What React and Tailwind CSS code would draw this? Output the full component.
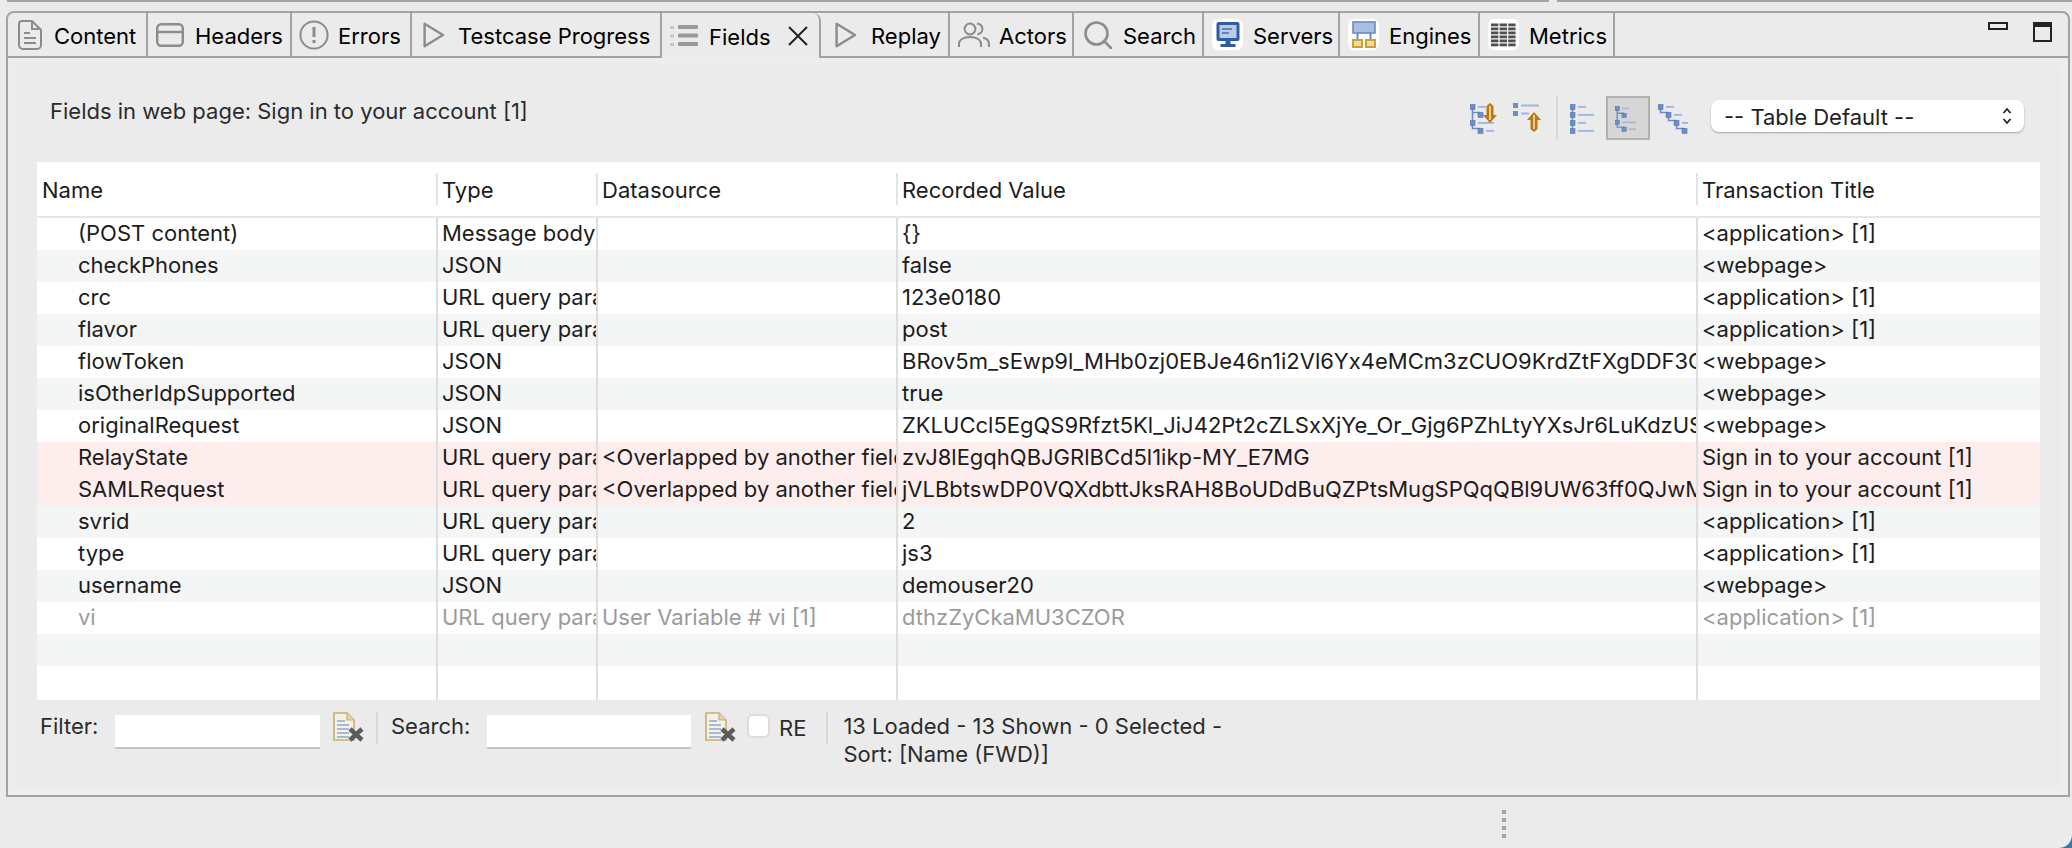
const font = { fontFamily: '"Inter", "Liberation Sans", sans-serif' };

function DocIcon() {
  return (
    <svg viewBox="0 0 24 30" className="ml-[10px] w-[24px] h-[30px]" fill="none" stroke="#8c8c8c" strokeWidth="2">
      <path d="M4 1h10l9 9v15a4 4 0 0 1-4 4H5a4 4 0 0 1-4-4V4a3 3 0 0 1 3-3z" />
      <path d="M14 1v8h9M6 13h6M6 18h12M6 23h12" />
    </svg>
  );
}
function HeaderIcon() {
  return (
    <svg viewBox="0 0 28 24" className="ml-[8px] w-[28px] h-[24px]" fill="none" stroke="#8c8c8c" strokeWidth="2.4">
      <rect x="1.2" y="1.2" width="25.6" height="21.6" rx="4" />
      <path d="M1 9h26" />
    </svg>
  );
}
function ErrorIcon() {
  return (
    <svg viewBox="0 0 30 30" className="ml-[7px] w-[30px] h-[30px]" fill="none" stroke="#8c8c8c" strokeWidth="2">
      <circle cx="15" cy="15" r="13.6" />
      <path d="M15 7v10" strokeWidth="3" />
      <path d="M15 20v3" strokeWidth="3" />
    </svg>
  );
}
function PlayIcon({ cls }) {
  return (
    <svg viewBox="0 0 22 26" className={cls} fill="none" stroke="#8c8c8c" strokeWidth="2.4">
      <path d="M1.6 1.8v22.4L20 13z" strokeLinejoin="round" />
    </svg>
  );
}
function ListIcon() {
  return (
    <svg viewBox="0 0 28 22" className="ml-[8px] w-[28px] h-[22px]" fill="#9a9a9a">
      <rect x="0" y="1" width="4" height="3" fill="#c8c8c8" />
      <rect x="0" y="9.5" width="4" height="3" fill="#c8c8c8" />
      <rect x="0" y="18" width="4" height="3" fill="#c8c8c8" />
      <rect x="8" y="0" width="20" height="4" rx="1" />
      <rect x="8" y="8.5" width="20" height="4" rx="1" />
      <rect x="8" y="17" width="20" height="4" rx="1" />
    </svg>
  );
}
function ActorsIcon() {
  return (
    <svg viewBox="0 0 32 26" className="ml-[8px] w-[32px] h-[26px]" fill="none" stroke="#8c8c8c" strokeWidth="2">
      <circle cx="12" cy="7" r="5.4" />
      <path d="M1 25v-3c0-4 4-7 11-7s11 3 11 7v3" />
      <path d="M19 1.6c3.6.6 5.4 3 5.4 5.4s-1.8 4.8-5 5.4" />
      <path d="M25 15.5c3.6 1 6 3.4 6 6.5v3" />
    </svg>
  );
}
function SearchIcon() {
  return (
    <svg viewBox="0 0 28 28" className="ml-[10px] w-[28px] h-[28px]" fill="none" stroke="#8c8c8c" strokeWidth="2.6">
      <circle cx="12.5" cy="12.5" r="11" />
      <path d="M20 20l7 7" strokeLinecap="round" />
    </svg>
  );
}
function ServerIcon() {
  return (
    <div className="ml-[8px] w-[31px] h-[31px] rounded-md bg-white flex items-center justify-center">
      <svg viewBox="0 0 24 25" className="w-[24px] h-[25px]">
        <rect x="0.5" y="0" width="23" height="19" rx="2" fill="#2f5da3" />
        <rect x="3.5" y="3" width="17" height="13" fill="#b9cbe6" />
        <path d="M6 7h10M6 11h7" stroke="#4a6ea8" strokeWidth="1.6" />
        <path d="M9.5 19h5v3h-5z" fill="#2f5da3" />
        <rect x="4.5" y="22" width="15" height="3" fill="#2f5da3" />
      </svg>
    </div>
  );
}
function EngineIcon() {
  return (
    <div className="ml-[8px] w-[31px] h-[31px] rounded-md bg-white flex items-center justify-center">
      <svg viewBox="0 0 24 27" className="w-[24px] h-[27px]" fill="none">
        <rect x="1" y="1" width="22" height="11" fill="#a9bfe2" stroke="#6a8cc2" strokeWidth="1.6" />
        <path d="M5.5 12v7M18.5 12v7" stroke="#6a8cc2" strokeWidth="2" />
        <rect x="1" y="19" width="9" height="7" fill="#f2dc9a" stroke="#c9a23c" strokeWidth="2" />
        <rect x="14" y="19" width="9" height="7" fill="#f2dc9a" stroke="#c9a23c" strokeWidth="2" />
      </svg>
    </div>
  );
}
function MetricsIcon() {
  const cols = [0, 8.6, 17.2];
  const rows = [0, 4, 8, 12, 16, 20];
  return (
    <div className="ml-[8px] w-[31px] h-[31px] rounded-md bg-white flex items-center justify-center">
      <svg viewBox="0 0 25 24" className="w-[25px] h-[24px]" fill="#4f4f4f">
        {rows.map(y => cols.map(x => <rect key={`${x}-${y}`} x={x} y={y + 0.5} width="7.4" height="2.8" />))}
      </svg>
    </div>
  );
}

const tabs = [
  { label: "Content", w: "w-[140px]", off: "w-[46px]", icon: <DocIcon /> },
  { label: "Headers", w: "w-[144px]", off: "w-[47px]", icon: <HeaderIcon /> },
  { label: "Errors", w: "w-[120px]", off: "w-[46px]", icon: <ErrorIcon /> },
  { label: "Testcase Progress", w: "w-[250px]", off: "w-[46px]", icon: <PlayIcon cls="ml-[11px] w-[22px] h-[26px]" /> },
  { label: "Fields", w: "w-[159px]", off: "w-[47px]", icon: <ListIcon />, active: true },
  { label: "Replay", w: "w-[129px]", off: "w-[50px]", icon: <PlayIcon cls="ml-[14px] w-[22px] h-[26px]" /> },
  { label: "Actors", w: "w-[124px]", off: "w-[49px]", icon: <ActorsIcon /> },
  { label: "Search", w: "w-[130px]", off: "w-[49px]", icon: <SearchIcon /> },
  { label: "Servers", w: "w-[136px]", off: "w-[49px]", icon: <ServerIcon /> },
  { label: "Engines", w: "w-[140px]", off: "w-[49px]", icon: <EngineIcon /> },
  { label: "Metrics", w: "w-[135px]", off: "w-[49px]", icon: <MetricsIcon /> },
];

const rows = [
  ["(POST content)", "Message body", "", "{}", "<application> [1]"],
  ["checkPhones", "JSON", "", "false", "<webpage>"],
  ["crc", "URL query parameter", "", "123e0180", "<application> [1]"],
  ["flavor", "URL query parameter", "", "post", "<application> [1]"],
  ["flowToken", "JSON", "", "BRov5m_sEwp9l_MHb0zj0EBJe46n1i2Vl6Yx4eMCm3zCUO9KrdZtFXgDDF3Q0xYz", "<webpage>"],
  ["isOtherIdpSupported", "JSON", "", "true", "<webpage>"],
  ["originalRequest", "JSON", "", "ZKLUCcl5EgQS9Rfzt5Kl_JiJ42Pt2cZLSxXjYe_Or_Gjg6PZhLtyYXsJr6LuKdzUSxyz", "<webpage>"],
  ["RelayState", "URL query parameter", "<Overlapped by another field>", "zvJ8lEgqhQBJGRlBCd5l1ikp-MY_E7MG", "Sign in to your account [1]", "pink"],
  ["SAMLRequest", "URL query parameter", "<Overlapped by another field>", "jVLBbtswDP0VQXdbttJksRAH8BoUDdBuQZPtsMugSPQqQBl9UW63ff0QJwMabcd", "Sign in to your account [1]", "pink"],
  ["svrid", "URL query parameter", "", "2", "<application> [1]"],
  ["type", "URL query parameter", "", "js3", "<application> [1]"],
  ["username", "JSON", "", "demouser20", "<webpage>"],
  ["vi", "URL query parameter", "User Variable # vi [1]", "dthzZyCkaMU3CZOR", "<application> [1]", "muted"],
  ["", "", "", "", ""],
  ["", "", "", "", ""],
];

const colGrid = "grid grid-cols-[399px_160px_300px_800px_344px]";

function TreeIcon({ cls, variant }) {
  const blue = "#6f8fc4";
  const node = (x, y) => <rect x={x} y={y} width="5" height="5" fill={blue} stroke="#4f74b0" strokeWidth="0.6" />;
  const bar = (x, y, w) => <rect x={x} y={y} width={w} height="1.8" fill="#9fb5d9" />;
  if (variant === "flat") {
    return (
      <svg viewBox="0 0 24 30" className={cls}>
        <path d="M2.5 3v24" stroke={blue} strokeWidth="1.6" />
        {node(0, 1)}{bar(8, 2.5, 8)}{node(0, 9)}{bar(8, 10.5, 16)}{node(0, 17)}{bar(8, 18.5, 8)}{node(0, 25)}{bar(8, 26.5, 16)}
      </svg>
    );
  }
  if (variant === "step") {
    return (
      <svg viewBox="0 0 30 30" className={cls}>
        <path d="M2.5 3v6h8v8h8v8h8" fill="none" stroke={blue} strokeWidth="1.6" />
        {node(0, 1)}{bar(8, 2.5, 8)}{node(8, 9)}{bar(16, 10.5, 8)}{node(16, 17)}{bar(24, 18.5, 6)}{node(24, 25)}
      </svg>
    );
  }
  return (
    <svg viewBox="0 0 30 30" className={cls}>
      <path d="M2.5 3v19M2.5 9h8M2.5 22v3h8" fill="none" stroke={blue} strokeWidth="1.6" />
      {node(0, 1)}{bar(8, 2.5, 8)}{node(8, 9)}{node(0, 17)}{bar(8, 18.5, 16)}{node(8, 25)}{bar(16, 26.5, 8)}
    </svg>
  );
}

function Arrow({ up, cls }) {
  return (
    <svg viewBox="0 0 14 20" className={cls}>
      {up
        ? <path d="M7 0L14 8H10.5V17L7 20L3.5 17V8H0z" fill="#b8790f" />
        : <path d="M7 20L14 12H10.5V3L7 0L3.5 3V12H0z" fill="#b8790f" />}
      <path d="M7 3v14" stroke="#f3dfae" strokeWidth="1.6" />
    </svg>
  );
}

function ClearIcon({ cls }) {
  return (
    <svg viewBox="0 0 31 30" className={cls}>
      <path d="M1 1h13l7 7v20H1z" fill="#f4f1e6" stroke="#c9ad70" strokeWidth="1.6" />
      <path d="M14 1v7h7" fill="#e4d6ac" stroke="#c9ad70" strokeWidth="1.2" />
      <path d="M4 9h8M4 13h12M4 17h12M4 21h12M4 25h12" stroke="#8ea7cf" strokeWidth="1.6" />
      <path d="M17 17l12 11M29 17L17 28" stroke="#5c5c5c" strokeWidth="4.5" />
    </svg>
  );
}

export default function App() {
  return (
    <div className="relative h-[848px] w-[2072px] overflow-hidden bg-[#ebebeb] text-[22px] text-[#1c1c1c]" style={font}>
      <div className="flex ml-[7px] h-[2px] mb-[9px]">
        <div className="w-[1542px] bg-[#a3a3a3]" />
        <div className="w-[8px]" />
        <div className="flex-1 bg-[#a3a3a3]" />
      </div>

      <div className="ml-[6px] mr-[2px] h-[786px] flex flex-col rounded-t-lg border-2 border-[#a3a3a3] bg-[#ebebeb]">
        <div className="flex h-[45px] shrink-0">
          {tabs.map(t => (
            <div
              key={t.label}
              className={`${t.w} shrink-0 flex items-center border-r-2 border-[#a3a3a3] text-black ${t.active ? "rounded-tr-lg" : "border-b-2"}`}
            >
              <div className={`${t.off} shrink-0`}>{t.icon}</div>
              <span className="whitespace-nowrap pt-[4px]">{t.label}</span>
              {t.active && (
                <svg viewBox="0 0 20 20" className="ml-[17px] w-[20px] h-[20px]" fill="none" stroke="#222" strokeWidth="2">
                  <path d="M1 1l18 18M19 1L1 19" />
                </svg>
              )}
            </div>
          ))}
          <div className="flex-1 flex justify-end gap-[25px] pt-[9px] pr-[16px] border-b-2 border-[#a3a3a3]">
            <div className="w-[20px] h-[8px] border-2 border-[#222]" />
            <div className="w-[19px] h-[20px] border-2 border-t-[5px] border-[#222]" />
          </div>
        </div>

        <div className="flex-1 pl-[8px] pr-[7px] py-[7px] bg-[#ededed]">
          <div className="h-full bg-[#ebebeb] flex flex-col px-[21px]">
            <div className="h-[97px] shrink-0 flex items-start">
              <div className="pl-[13px] pt-[30px] text-[#2b2b2b]">Fields in web page: Sign in to your account [1]</div>
              <div className="ml-auto flex items-start pt-[31px] pr-[16px]">
                <div className="relative w-[30px] h-[31px] mt-[7px]">
                  <TreeIcon cls="w-[30px] h-[31px]" />
                  <Arrow cls="absolute left-[13px] top-[0px] w-[14px] h-[20px]" />
                </div>
                <div className="relative ml-[13px] w-[28px] h-[24px] mt-[7px]">
                  <svg viewBox="0 0 28 14" className="w-[28px] h-[14px]">
                    <rect x="0" y="0" width="5" height="5" fill="#6f8fc4" />
                    <rect x="8" y="1.5" width="18" height="2" fill="#9fb5d9" />
                    <rect x="0" y="8" width="5" height="5" fill="#6f8fc4" />
                    <rect x="8" y="9.5" width="8" height="2" fill="#9fb5d9" />
                  </svg>
                  <Arrow up cls="absolute left-[14px] top-[9px] w-[14px] h-[20px]" />
                </div>
                <div className="ml-[15px] w-[2px] h-[44px] bg-[#d8d8d8]" />
                <TreeIcon variant="flat" cls="ml-[12px] mt-[7px] w-[24px] h-[31px]" />
                <div className="ml-[12px] w-[44px] h-[44px] bg-[#d6d6d6] border-2 border-[#b2b2b2] flex items-center justify-center">
                  <TreeIcon cls="w-[26px] h-[31px]" />
                </div>
                <TreeIcon variant="step" cls="ml-[8px] mt-[7px] w-[30px] h-[31px]" />
                <div className="ml-[23px] mt-[4px] w-[313px] h-[32px] rounded-lg bg-white shadow-[0_1px_2px_rgba(0,0,0,0.3)] flex items-center pl-[13px] pr-[12px] text-[#222]">
                  <span className="pt-[2px]">-- Table Default --</span>
                  <svg viewBox="0 0 10 18" className="ml-auto w-[10px] h-[18px]" fill="none" stroke="#222" strokeWidth="1.8">
                    <path d="M1.5 6L5 2l3.5 4M1.5 12L5 16l3.5-4" />
                  </svg>
                </div>
              </div>
            </div>

            <div className="h-[538px] shrink-0 bg-white flex flex-col">
              <div className={`${colGrid} h-[56px] shrink-0 items-center border-b-2 border-[#e6e6e6]`}>
                {["Name", "Type", "Datasource", "Recorded Value", "Transaction Title"].map((h, i) => (
                  <div key={h} className={`h-[32px] leading-[34px] ${i ? "pl-[4px] border-l-2 border-[#e4e4e4]" : "pl-[5px]"}`}>{h}</div>
                ))}
              </div>
              {rows.map((r, i) => {
                const bg = r[5] === "pink" ? "bg-[#fdeeed]" : i % 2 ? "bg-[#f4f5f5]" : "bg-white";
                const color = r[5] === "muted" ? "text-[#9b9b9b]" : "text-[#1c1c1c]";
                return (
                  <div key={i} className={`${colGrid} ${bg} ${color} ${i === 14 ? "h-[34px]" : "h-[32px]"} leading-[30px]`}>
                    {r.slice(0, 5).map((c, j) => (
                      <div key={j} className={`overflow-hidden whitespace-nowrap ${j ? "pl-[4px] border-l-2 border-[#dedede]" : "pl-[41px]"}`}>{c}</div>
                    ))}
                  </div>
                );
              })}
            </div>

            <div className="flex items-start pt-[12px] text-[#2b2b2b]">
              <span className="ml-[3px] w-[75px] leading-[28px]">Filter:</span>
              <div className="mt-[3px] w-[205px] h-[34px] bg-white border-b-2 border-[#c4c4c4]" />
              <ClearIcon cls="ml-[13px] w-[31px] h-[30px]" />
              <div className="ml-[12px] w-[2px] h-[32px] bg-[#d8d8d8]" />
              <span className="ml-[13px] w-[96px] leading-[28px]">Search:</span>
              <div className="mt-[3px] w-[204px] h-[34px] bg-white border-b-2 border-[#c4c4c4]" />
              <ClearIcon cls="ml-[14px] w-[31px] h-[30px]" />
              <div className="ml-[11px] mt-[2px] w-[23px] h-[24px] rounded-md bg-white border-2 border-[#dcdcdc]" />
              <span className="ml-[9px] leading-[32px]">RE</span>
              <div className="ml-[20px] w-[2px] h-[32px] bg-[#d8d8d8]" />
              <div className="ml-[15px] leading-[28px]">
                <div>13 Loaded - 13 Shown - 0 Selected -</div>
                <div>Sort: [Name (FWD)]</div>
              </div>
            </div>
          </div>
        </div>
      </div>

      <div className="mt-[13px] ml-[1502px] flex flex-col gap-[4px]">
        <div className="w-[4px] h-[4px] bg-[#a9a49a]" />
        <div className="w-[4px] h-[4px] bg-[#a9a49a]" />
        <div className="w-[4px] h-[4px] bg-[#a9a49a]" />
        <div className="w-[4px] h-[4px] bg-[#a9a49a]" />
      </div>

      <svg viewBox="0 0 14 14" className="absolute right-0 bottom-0 w-[14px] h-[14px]">
        <path d="M14 0C14 8 9 14 0 14H14z" fill="#3f76a8" />
      </svg>
    </div>
  );
}
